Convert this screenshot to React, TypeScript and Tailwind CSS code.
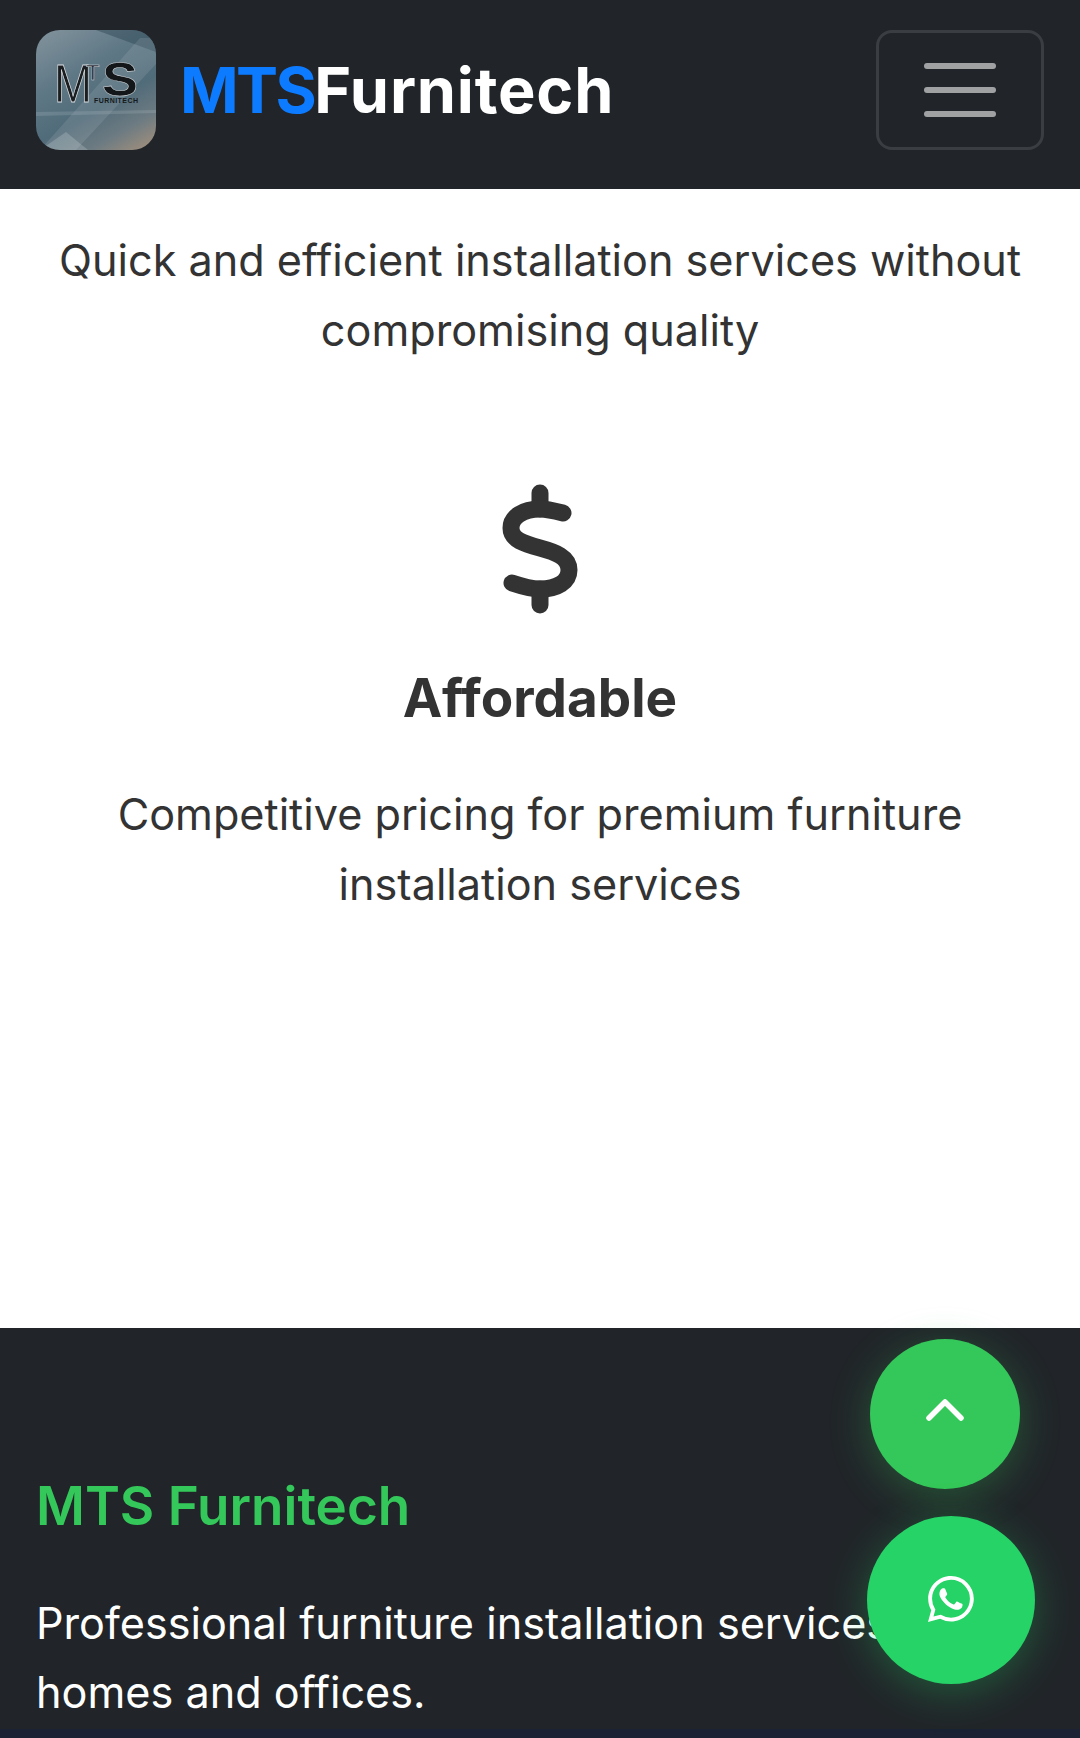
const font = "font-['Inter',sans-serif]";

function Logo() {
  return (
    <div className="relative w-[120px] h-[120px] rounded-[24px] overflow-hidden shrink-0 bg-[linear-gradient(150deg,#83949d_0%,#5f7886_35%,#506b79_60%,#6d7b82_80%,#a8927c_100%)]">
      <svg viewBox="0 0 120 120" className="absolute inset-0 w-full h-full">
        <path d="M60 0 L120 0 L120 22 Z" fill="#2c4453" opacity="0.45" />
        <path d="M104 8 L120 8 L120 34 L40 120 L4 120 Z" fill="#ffffff" opacity="0.1" />
        <path d="M0 82 L120 80 L120 83 L0 86 Z" fill="#c5d3da" opacity="0.18" />
        <path d="M4 120 L30 102 L52 120 Z" fill="#dfe6e9" opacity="0.22" />
        <text x="18" y="72" fontSize="54" fontFamily="Liberation Sans" textLength="38" lengthAdjust="spacingAndGlyphs" fill="#1a1e21" stroke="#d9dde0" strokeWidth="0.8">M</text>
        <text x="50" y="50" fontSize="22" fontFamily="Liberation Sans" fill="#1a1e21" stroke="#d9dde0" strokeWidth="0.5">T</text>
        <text x="66" y="66" fontSize="48" fontFamily="Liberation Sans" textLength="36" lengthAdjust="spacingAndGlyphs" fontWeight="700" fill="#14171a" stroke="#cfd4d8" strokeWidth="0.5">S</text>
        <text x="58" y="73" fontSize="7" fontFamily="Liberation Sans" fontWeight="700" textLength="44" fill="#15191c">FURNITECH</text>
      </svg>
    </div>
  );
}

function WhatsApp() {
  return (
    <svg viewBox="0 0 16 16" fill="currentColor" className="w-[46px] h-[46px] mb-[2px]">
      <path d="M13.601 2.326A7.854 7.854 0 0 0 7.994 0C3.627 0 .068 3.558.064 7.926c0 1.399.366 2.76 1.057 3.965L0 16l4.204-1.102a7.933 7.933 0 0 0 3.79.965h.004c4.368 0 7.926-3.558 7.93-7.93A7.898 7.898 0 0 0 13.6 2.326zM7.994 14.521a6.573 6.573 0 0 1-3.356-.92l-.24-.144-2.494.654.666-2.433-.156-.251a6.56 6.56 0 0 1-1.007-3.505c0-3.626 2.957-6.584 6.591-6.584a6.56 6.56 0 0 1 4.66 1.931 6.557 6.557 0 0 1 1.928 4.66c-.004 3.639-2.961 6.592-6.592 6.592zm3.615-4.934c-.197-.099-1.17-.578-1.353-.646-.182-.065-.315-.099-.445.099-.133.197-.513.646-.627.775-.114.133-.232.148-.43.05-.197-.1-.836-.308-1.592-.985-.59-.525-.985-1.175-1.103-1.372-.114-.198-.011-.304.088-.403.087-.088.197-.232.296-.346.1-.114.133-.198.198-.33.065-.134.034-.248-.015-.347-.05-.099-.445-1.076-.612-1.47-.16-.389-.323-.335-.445-.34-.114-.007-.247-.007-.38-.007a.729.729 0 0 0-.529.247c-.182.198-.691.677-.691 1.654 0 .977.71 1.916.81 2.049.098.133 1.394 2.132 3.383 2.992.47.205.84.326 1.129.418.475.152.904.129 1.246.08.38-.058 1.171-.48 1.338-.943.164-.464.164-.86.114-.943-.049-.084-.182-.133-.38-.232z" />
    </svg>
  );
}

export default function App() {
  return (
    <div className={`relative h-[1738px] overflow-hidden bg-white ${font}`}>
      <nav className="h-[189px] bg-[#212529] flex items-start justify-between pt-[30px] pl-[36px] pr-[36px]">
        <div className="flex items-center gap-[24px]">
          <Logo />
          <span className="text-[63px] leading-none font-bold text-white tracking-[0.8px]">
            <span className="text-[#0d7bff] tracking-[-2.6px]">MTS</span>Furnitech
          </span>
        </div>
        <button className="w-[168px] h-[120px] rounded-[16px] border-[3px] border-[#3a3e43] flex flex-col items-center justify-center gap-[18px]">
          <span className="w-[72px] h-[6px] rounded-full bg-[#a0a1a3]" />
          <span className="w-[72px] h-[6px] rounded-full bg-[#a0a1a3]" />
          <span className="w-[72px] h-[6px] rounded-full bg-[#a0a1a3]" />
        </button>
      </nav>

      <main className="h-[1139px] px-[36px] text-center text-[#333333]">
        <p className="pt-[36px] text-[43.2px] leading-[70px]">
          Quick and efficient installation services without compromising quality
        </p>
        <div className="mt-[115px] flex justify-center">
          <svg viewBox="0 0 90 136" className="w-[90px] h-[136px]" fill="none" stroke="currentColor" strokeWidth="17" strokeLinecap="round">
            <path d="M45 13 V29" />
            <path d="M68 33 C60 31 52 29 45 29 C28 29 16 37 16 48 C16 60 30 64 45 68 C60 72 74 77 74 90 C74 102 62 109 45 109 C35 109 26 106 17 103" />
            <path d="M45 109 V125" />
          </svg>
        </div>
        <h3 className="mt-[51px] text-[53px] leading-[62px] font-bold">Affordable</h3>
        <p className="mt-[50px] px-[50px] text-[43.2px] leading-[70px]">
          Competitive pricing for premium furniture installation services
        </p>
      </main>

      <footer className="h-[401px] bg-[#212529] px-[36px] pt-[147px] text-white">
        <h5 className="text-[53px] leading-[62px] font-semibold text-[#34c759]">MTS Furnitech</h5>
        <p className="mt-[52px] text-[43.2px] leading-[69px] whitespace-nowrap">Professional furniture installation services for</p>
        <p className="text-[43.2px] leading-[69px]">homes and offices.</p>
      </footer>
      <div className="h-[9px] bg-[#1a2233]" />

      <button className="absolute left-[870px] top-[1339px] w-[150px] h-[150px] rounded-full bg-[#34c759] text-white flex items-center justify-center shadow-[0_8px_40px_rgba(52,199,89,0.3)]">
        <svg viewBox="0 0 40 24" className="w-[40px] h-[24px] mb-[10px]" fill="none" stroke="currentColor" strokeWidth="5.5" strokeLinecap="round" strokeLinejoin="round">
          <path d="M4 21 L20 5 L36 21" />
        </svg>
      </button>
      <button className="absolute left-[867px] top-[1516px] w-[168px] h-[168px] rounded-full bg-[#25d366] text-white flex items-center justify-center shadow-[0_8px_40px_rgba(37,211,102,0.3)]">
        <WhatsApp />
      </button>
    </div>
  );
}
